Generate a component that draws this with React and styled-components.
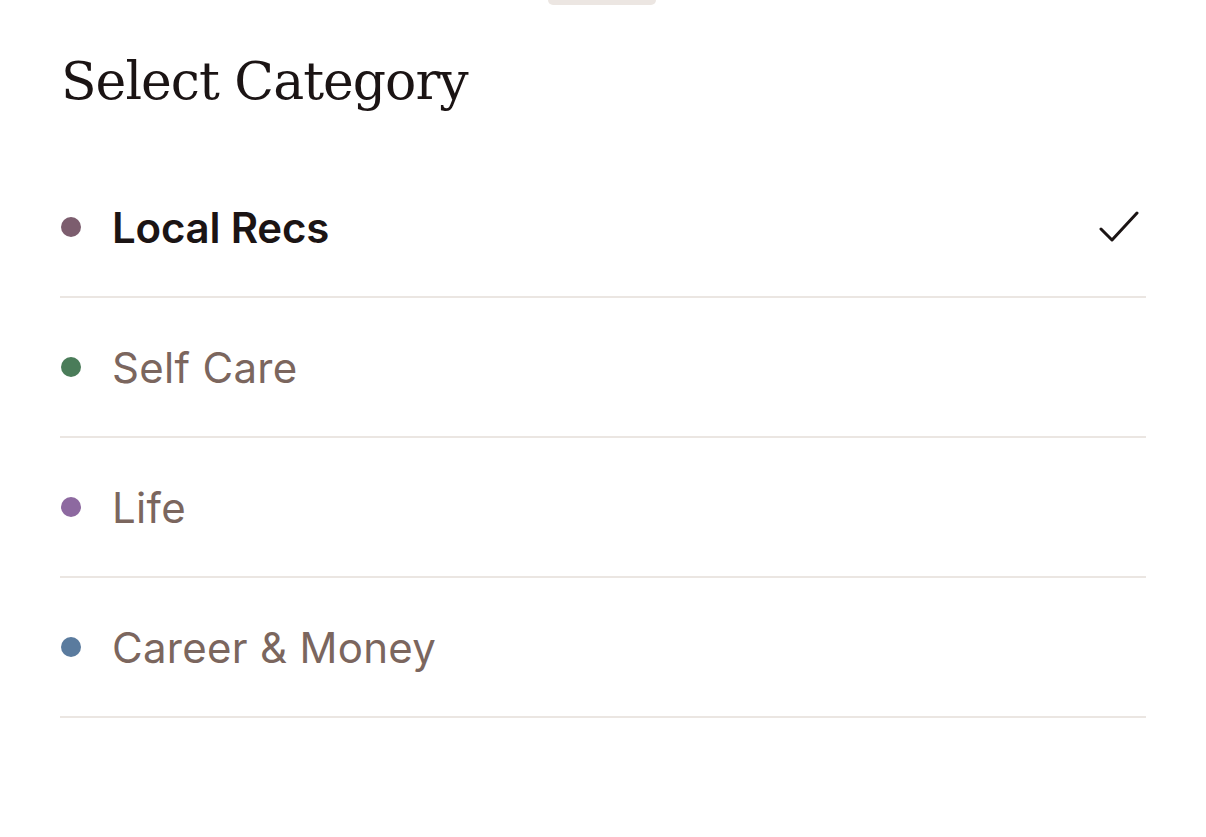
import React from "react";
import styled, { createGlobalStyle } from "styled-components";

const GlobalStyle = createGlobalStyle`
  html, body {
    margin: 0;
    padding: 0;
    background: #ffffff;
  }
`;

const Sheet = styled.div`
  width: 1206px;
  height: 837px;
  box-sizing: border-box;
  background: #ffffff;
  display: flex;
  flex-direction: column;
`;

const Handle = styled.div`
  align-self: center;
  width: 108px;
  height: 5px;
  margin-left: -3px;
  background: #ece6e2;
  border-radius: 0 0 6px 6px;
`;

const Content = styled.div`
  padding: 0 60px;
  display: flex;
  flex-direction: column;
`;

const Title = styled.h1`
  margin: 41px 0 0 1px;
  font-family: "DejaVu Serif", "Liberation Serif", serif;
  font-weight: 400;
  font-size: 52px;
  line-height: 70px;
  color: #1b1414;
  letter-spacing: -1px;
`;

const List = styled.ul`
  list-style: none;
  margin: 42px 0 0;
  padding: 0;
`;

const Row = styled.li`
  height: 138px;
  display: flex;
  align-items: center;
  border-bottom: 2px solid #ebe6e2;
  cursor: pointer;
`;

const Dot = styled.span`
  width: 20px;
  height: 20px;
  border-radius: 50%;
  background: ${(p) => p.color};
  margin-left: 1px;
  margin-right: 31px;
  flex-shrink: 0;
`;

const Label = styled.span`
  flex: 1;
  font-family: "Inter", "Noto Sans", sans-serif;
  font-size: 42px;
  font-weight: ${(p) => (p.selected ? 600 : 400)};
  color: ${(p) => (p.selected ? "#1b1414" : "#7b665e")};
  letter-spacing: ${(p) => (p.selected ? "-0.2px" : "0.3px")};
`;

const Check = styled.svg`
  width: 40px;
  height: 32px;
  margin-right: 7px;
`;

const categories = [
  { name: "Local Recs", color: "#7c5d6e", selected: true },
  { name: "Self Care", color: "#4a7c59" },
  { name: "Life", color: "#8d69a0" },
  { name: "Career & Money", color: "#5a7b9e" },
];

export default function App() {
  return (
    <>
      <GlobalStyle />
      <Sheet>
        <Handle />
        <Content>
          <Title>Select Category</Title>
          <List>
            {categories.map((c) => (
              <Row key={c.name}>
                <Dot color={c.color} />
                <Label selected={c.selected}>{c.name}</Label>
                {c.selected && (
                  <Check viewBox="0 0 40 32">
                    <path
                      d="M2 18 L13 29 L38 2"
                      fill="none"
                      stroke="#1b1414"
                      strokeWidth="3"
                      strokeLinecap="round"
                      strokeLinejoin="round"
                    />
                  </Check>
                )}
              </Row>
            ))}
          </List>
        </Content>
      </Sheet>
    </>
  );
}
